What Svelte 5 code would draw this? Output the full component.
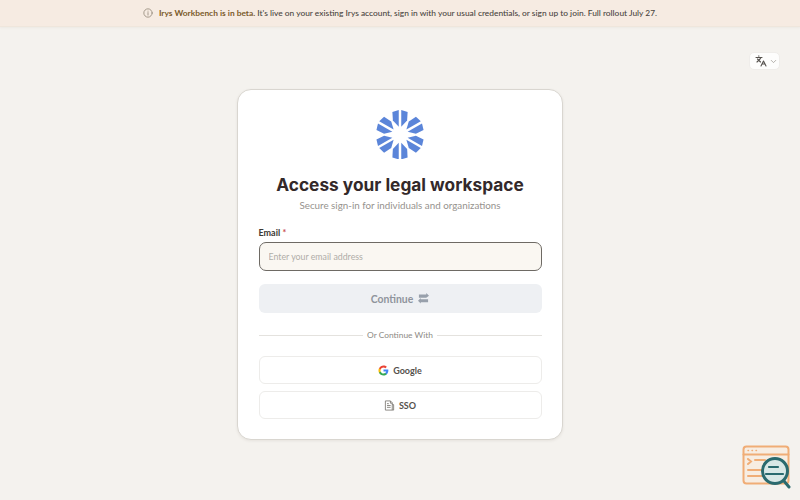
<script lang="ts">
const petals = [0, 60, 120, 180, 240, 300];
</script>

<div class="page">
  <div class="banner">
    <svg class="info" viewBox="0 0 24 24" fill="none" stroke="#8a7f70" stroke-width="1.8" stroke-linecap="round">
      <circle cx="12" cy="12" r="10" />
      <path d="M12 11v6M12 7.5v.2" />
    </svg>
    <p><strong>Irys Workbench is in beta.</strong> It's live on your existing Irys account, sign in with your usual credentials, or sign up to join. Full rollout July 27.</p>
  </div>

  <button class="lang" aria-label="Language">
    <svg width="12" height="12" viewBox="0 0 24 24" fill="none" stroke="#55524e" stroke-width="2.2" stroke-linecap="round" stroke-linejoin="round">
      <path d="m5 8 6 6M4 14l6-6 2-3M2 5h12M7 2h1M22 22l-5-10-5 10M14 18h6" />
    </svg>
    <svg width="9" height="9" viewBox="0 0 24 24" fill="none" stroke="#a5a29c" stroke-width="2.2" stroke-linecap="round" stroke-linejoin="round">
      <path d="m6 9 6 6 6-6" />
    </svg>
  </button>

  <main class="main">
    <section class="card">
      <svg class="logo" viewBox="-26 -26 52 52" width="52" height="52">
        {#each petals as angle}
          <g fill="#5b85d9" transform={`rotate(${angle})`}>
            <polygon points="-1.300,-26 -8,-24 -7.500,-15 -1.300,-8.500" />
            <polygon points="1.300,-26 8,-24 7.500,-15 1.300,-8.500" />
          </g>
        {/each}
      </svg>
      <h1>Access your legal workspace</h1>
      <p class="sub">Secure sign-in for individuals and organizations</p>

      <div class="field">
        <label for="email">Email <span>*</span></label>
        <input id="email" type="email" placeholder="Enter your email address" />
      </div>

      <button class="continue">
        Continue
        <svg width="11" height="11" viewBox="0 0 12 12" fill="#98a0ab">
          <path d="M1 1.500h8V0l3 3-3 2.200H1zM11 6.800H3V5.500L0 8.500l3 3V10h8z" />
        </svg>
      </button>

      <div class="divider"><span>Or Continue With</span></div>

      <div class="providers">
        <button class="provider">
          <svg width="11" height="11" viewBox="0 0 24 24">
            <path fill="#4285F4" d="M22.560 12.250c0-.78-.07-1.530-.2-2.250H12v4.260h5.920c-.26 1.370-1.040 2.530-2.210 3.310v2.770h3.570c2.080-1.920 3.280-4.740 3.280-8.090z" />
            <path fill="#34A853" d="M12 23c2.970 0 5.460-.98 7.280-2.660l-3.570-2.770c-.98.660-2.230 1.060-3.710 1.060-2.860 0-5.290-1.930-6.160-4.530H2.180v2.840C3.990 20.530 7.700 23 12 23z" />
            <path fill="#FBBC05" d="M5.840 14.100c-.22-.66-.35-1.360-.35-2.100s.13-1.440.35-2.100V7.060H2.180C1.430 8.550 1 10.220 1 12s.43 3.450 1.180 4.940l3.660-2.840z" />
            <path fill="#EA4335" d="M12 5.380c1.620 0 3.060.56 4.210 1.640l3.150-3.150C17.450 2.090 14.970 1 12 1 7.700 1 3.990 3.470 2.180 7.060l3.660 2.840c.87-2.600 3.300-4.520 6.160-4.520z" />
          </svg>
          Google
        </button>
        <button class="provider">
          <svg width="11" height="11" viewBox="0 0 24 24" fill="none" stroke="#77736d" stroke-width="1.800" stroke-linejoin="round">
            <path d="M3 22V2h11l4 4v16zM14 2v5h4M18 10h3v12h-3M6.500 8h4M6.500 12h8M6.500 16h8" />
          </svg>
          SSO
        </button>
      </div>
    </section>
  </main>

  <div class="widget" aria-hidden="true">
    <svg width="50" height="44" viewBox="0 0 50 44" fill="none" stroke-linecap="round">
      <rect x="1.500" y="1.500" width="45" height="37" rx="3" fill="#f7ede2" stroke="#f0ad76" stroke-width="2" />
      <path d="M1.500 9.500h45" stroke="#f0ad76" stroke-width="2" />
      <path d="M6 5.500h.5M10 5.500h.5M14 5.500h.5" stroke="#f0ad76" stroke-width="1.400" />
      <path d="m6 14 3 2.500-3 2.500M13 15h10M6 25h18M6 31h16" stroke="#f0ad76" stroke-width="2" />
      <circle cx="33" cy="26" r="12.500" fill="#d9e8e6" stroke="#2a6a6e" stroke-width="3" />
      <path d="M27 22h9M24 29h17" stroke="#2a6a6e" stroke-width="2.200" />
      <path d="m42 36 5 6" stroke="#2a6a6e" stroke-width="3" />
    </svg>
  </div>
</div>

<style>
  :global(body) {
    margin: 0;
    background: #f4f2ee;
    font-family: Lato, "Liberation Sans", sans-serif;
  }

  .page {
    position: relative;
    display: flex;
    flex-direction: column;
    height: 500px;
    overflow: hidden;
  }

  .banner {
    display: flex;
    align-items: center;
    justify-content: center;
    gap: 6px;
    height: 27px;
    box-sizing: border-box;
    background: #f6ebe2;
    border-bottom: 1px solid #efe6dc;
    box-shadow: 0 1px 2px rgb(120 100 80 / 0.06);
  }

  .banner p {
    margin: 0;
    font-size: 8.400px;
    font-weight: 500;
    color: #4a453f;
    white-space: nowrap;
  }

  .banner strong {
    color: #7a5a2a;
    font-weight: 700;
  }

  .info {
    width: 10px;
    height: 10px;
  }

  .lang {
    position: absolute;
    top: 52px;
    right: 20px;
    display: flex;
    align-items: center;
    gap: 2px;
    width: 31px;
    height: 18px;
    padding: 0 0 0 5px;
    border: 1px solid #efedea;
    border-radius: 5px;
    background: #fdfdfc;
  }

  .main {
    display: flex;
    justify-content: center;
    padding-top: 62px;
  }

  .card {
    display: flex;
    flex-direction: column;
    align-items: center;
    box-sizing: border-box;
    width: 326px;
    height: 351px;
    padding: 20px 20.500px;
    background: #fff;
    border: 1.500px solid #d9d6d0;
    border-radius: 14px;
    box-shadow: 0 1px 3px rgb(60 50 40 / 0.08);
  }

  .logo {
    display: block;
    margin-bottom: 15px;
  }

  h1 {
    margin: 0;
    font-family: Inter, "Liberation Sans", sans-serif;
    font-size: 17.300px;
    line-height: 22px;
    font-weight: 700;
    color: #33292a;
    white-space: nowrap;
  }

  .sub {
    margin: 2px 0 0;
    font-size: 9.800px;
    line-height: 14px;
    color: #96928e;
    white-space: nowrap;
  }

  .field {
    align-self: stretch;
    margin-top: 15px;
  }

  label {
    display: block;
    margin-bottom: 3px;
    font-size: 9px;
    line-height: 12px;
    font-weight: 700;
    color: #3c3834;
  }

  label span {
    color: #c9504a;
  }

  input {
    display: block;
    width: 100%;
    height: 29px;
    box-sizing: border-box;
    padding: 0 9px;
    border: 1px solid #6e6a64;
    border-radius: 7px;
    background: #faf7f2;
    font: inherit;
    font-size: 8.800px;
    outline: none;
  }

  input::placeholder {
    color: #b0ada8;
  }

  .continue {
    display: flex;
    align-items: center;
    justify-content: center;
    gap: 5px;
    align-self: stretch;
    height: 30px;
    margin-top: 13px;
    border: 0;
    border-radius: 6px;
    background: #eef0f3;
    font: inherit;
    font-size: 10.400px;
    font-weight: 700;
    color: #8f949c;
  }

  .divider {
    display: flex;
    align-items: center;
    gap: 4px;
    align-self: stretch;
    margin-top: 16px;
    font-size: 8.400px;
    line-height: 12px;
    color: #8d8a85;
  }

  .divider::before,
  .divider::after {
    content: "";
    flex: 1;
    height: 1px;
    background: #e4e2de;
  }

  .providers {
    display: flex;
    flex-direction: column;
    gap: 7px;
    align-self: stretch;
    margin-top: 15px;
  }

  .provider {
    display: flex;
    align-items: center;
    justify-content: center;
    gap: 4px;
    height: 28px;
    border: 1px solid #edecea;
    border-radius: 6px;
    background: #fff;
    font: inherit;
    font-size: 9px;
    font-weight: 700;
    color: #55514c;
  }

  .widget {
    position: absolute;
    right: 8px;
    bottom: 11px;
    line-height: 0;
  }
</style>
